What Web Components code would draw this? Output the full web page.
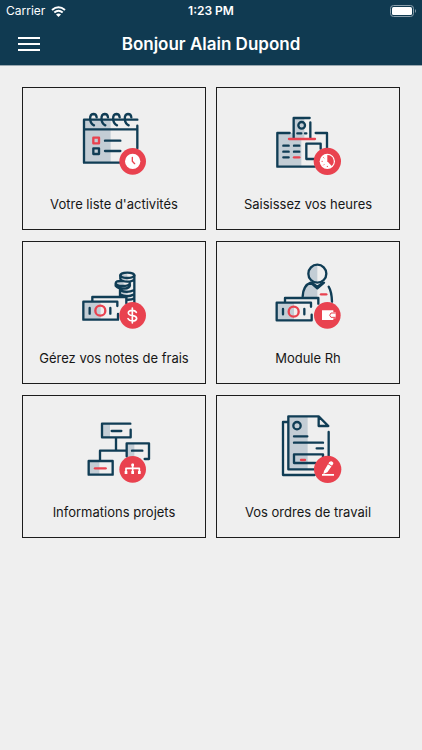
<!DOCTYPE html>
<html lang="fr">
<head>
<meta charset="utf-8">
<meta name="viewport" content="width=device-width, initial-scale=1">
<title>Bonjour Alain Dupond</title>
<style>
  body {
    margin: 0;
    min-height: 100vh;
    background: #efefef;
    color: #161616;
    font-family: Inter, "Liberation Sans", sans-serif;
  }
</style>
</head>
<body>
<home-page></home-page>

<script>
// 255 unit grid, drawn at 85px. Classes: f = pale fill, r = red stroke, b = badge
const icons = {
  calendar: `
    <path class="f" d="M36 59H116V188H36z"/>
    <path d="M196 59H36V188H145M196 77V145M36 88H196M99 122H145M99 153H145"/>
    <path d="M66 76C52 70 50 43 64 42Q73 42 74 52M100 76C86 70 84 43 98 42Q107 42 108 52M135 76C121 70 119 43 133 42Q142 42 143 52M170 76C156 70 154 43 168 42Q177 42 178 52"/>
    <path class="r" d="M64 113H81V130H64z"/>
    <path d="M64 145H81V162H64z"/>
    <circle class="b" cx="182" cy="184" r="40"/>
    <circle class="w" cx="182" cy="184" r="23"/>
    <path class="r thin" d="M181 172V184L188 191"/>`,
  timeclock: `
    <path class="f" d="M34 99H106V200H34zM83 55H115V113H83z"/>
    <path d="M71 99H34V200H146M149 99H183V146"/>
    <path d="M83 113V54H131M133 67V113M94 100H106M117 100H121"/>
    <circle cx="107" cy="76" r="10"/>
    <path class="r" d="M69 117H147"/>
    <path d="M52 137H68M84 137H100M52 155H68M84 155H100M52 172H68"/>
    <path class="r" d="M84 172H100"/>
    <path d="M164 146V131H121V177H146"/>
    <circle class="b" cx="184" cy="184" r="41"/>
    <circle class="w" cx="184" cy="184" r="23"/>
    <path class="b" d="M184 184V165A19 19 0 0 1 197 198z"/>
    <path class="r dots" d="M168 184H169M173 173L174 174M173 195L174 194M184 199V200"/>`,
  money: `
    <path class="f" d="M146 61H166V82H146zM133 79H155V98H133zM146 99H167V140H146z"/>
    <ellipse cx="166" cy="64" rx="21" ry="8"/>
    <path d="M145 64V75Q150 83 166 83Q182 83 187 75V64M150 81Q131 80 131 88Q133 97 154 96Q174 95 174 86M131 88V95Q139 105 155 104Q174 103 174 93M144 104V128M187 76V148M145 109Q165 119 187 108M145 122Q165 132 187 121M163 137Q179 138 187 133"/>
    <path class="bill" d="M61 129H163V196H61z"/>
    <path class="f" d="M34 143H86V197H34z"/>
    <path d="M61 140V129H163V148M136 143H34V197H138V180M136 143V156M53 162V179M115 162V179"/>
    <circle class="r" cx="85" cy="170" r="15"/>
    <circle class="b" cx="182" cy="184" r="40"/>
    <path class="ws" d="M193 175Q189 169 181 169Q169 169 169 177Q170 184 182 185Q194 187 194 194Q192 201 181 201Q172 201 168 194M181 162V207"/>`,
  employee: `
    <path class="f" d="M154 32A27 27 0 0 0 154 86zM111 130Q112 92 133 88L154 103V132z"/>
    <circle cx="154" cy="59" r="27"/>
    <path d="M110 127Q112 94 134 86L154 103L174 86M137 86L154 98L171 86M188 98Q197 113 198 143"/>
    <path class="r" d="M165 121H181"/>
    <path class="f" d="M32 146H84V199H32z"/>
    <path d="M57 142V132H157V149M135 146H32V199H137V182M135 146V158M51 165V181M115 165V181"/>
    <circle class="r" cx="83" cy="173" r="15"/>
    <circle class="b" cx="184" cy="184" r="40"/>
    <path class="w" d="M168 169H202V175H209V193H202V198H168z"/>
    <path class="r line" d="M208 177H195Q187 184 195 190H208"/>`,
  project: `
    <path class="f" d="M90 47H114V88H90zM164 106H187V153H164zM50 159H82V200H50z"/>
    <path d="M175 47H90V88H176V65M119 69H148M132 88V128M84 159V128H164M164 145V106H231V153H218M180 128H211M50 159H122V200H50z"/>
    <path class="r" d="M69 181H101"/>
    <circle class="b" cx="182" cy="184" r="40"/>
    <path class="ws" d="M162 194V181H202V194M182 169V194"/>
    <path class="w" d="M178 167H186V175H178zM158 189H166V198H158zM178 189H186V198H178zM198 189H206V198H198z"/>`,
  documents: `
    <path class="f" d="M67 25H125V184H67z"/>
    <path d="M67 42H51V201H146M158 25H67V184H146M158 25L187 54H158zM188 72V148M84 85H124M84 104H171M152 121H171M171 148V139H84V165H148"/>
    <circle cx="93" cy="53" r="11"/>
    <path class="r" d="M105 156H117"/>
    <circle class="b" cx="185" cy="184" r="41"/>
    <path class="w" d="M174 189L190 162Q196 157 200 162Q204 165 201 169L184 193L172 198zM168 198H204V203H168z"/>
    <path class="r line" d="M187 168L197 174"/>`
};

class HomePage extends HTMLElement {
  connectedCallback() {
    this.attachShadow({ mode: 'open' });
    this.shadowRoot.innerHTML = `
      <style>
        :host { display: block; }
        main {
          display: grid;
          grid-template-columns: 1fr 1fr;
          gap: 11px 10px;
          padding: 21px 22px;
        }
      </style>
      <app-header>Bonjour Alain Dupond</app-header>
      <main>
        <menu-card icon="calendar">Votre liste d'activités</menu-card>
        <menu-card icon="timeclock">Saisissez vos heures</menu-card>
        <menu-card icon="money">Gérez vos notes de frais</menu-card>
        <menu-card icon="employee">Module Rh</menu-card>
        <menu-card icon="project">Informations projets</menu-card>
        <menu-card icon="documents">Vos ordres de travail</menu-card>
      </main>
    `;
  }
}

class StatusBar extends HTMLElement {
  connectedCallback() {
    this.attachShadow({ mode: 'open' });
    this.shadowRoot.innerHTML = `
      <style>
        :host {
          display: grid;
          grid-template-columns: 1fr auto 1fr;
          align-items: center;
          height: 22px;
          padding: 0 6px;
          font-size: 12px;
          line-height: 22px;
        }
        .carrier { display: flex; align-items: center; gap: 6px; }
        .time { font-weight: 600; }
        svg { display: block; }
        .battery { justify-self: end; }
      </style>
      <span class="carrier">Carrier
        <svg width="15" height="11" viewBox="0 0 15 11" fill="none" stroke="#fff" stroke-width="2" aria-hidden="true">
          <path d="M1 4Q7.500 -1.500 14 4M3.300 6.600Q7.500 3 11.700 6.600"/>
          <path d="M5 8.400Q7.500 6.500 10 8.400L7.500 11z" fill="#fff" stroke="none"/>
        </svg>
      </span>
      <span class="time">1:23 PM</span>
      <svg class="battery" width="26" height="12" viewBox="0 0 26 12" aria-hidden="true">
        <rect x=".5" y=".5" width="23" height="11" rx="3" fill="none" stroke="#8a9fac"/>
        <rect x="2" y="2" width="20" height="8" rx="1.500" fill="#fff"/>
        <path d="M25 4Q27 6 25 8z" fill="#8a9fac"/>
      </svg>
    `;
  }
}

class AppHeader extends HTMLElement {
  connectedCallback() {
    this.attachShadow({ mode: 'open' });
    this.shadowRoot.innerHTML = `
      <style>
        :host {
          display: block;
          background: #103a51;
          border-bottom: 1px solid #9aa8b0;
          color: #fff;
        }
        .bar {
          display: grid;
          grid-template-columns: 46px 1fr 46px;
          align-items: center;
          height: 43px;
          padding: 0 6px;
        }
        button {
          display: grid;
          place-items: center;
          height: 43px;
          padding: 0;
          border: 0;
          background: none;
          color: inherit;
          cursor: pointer;
        }
        h1 {
          margin: 0;
          font-size: 17px;
          font-weight: 600;
          line-height: 22px;
          text-align: center;
        }
      </style>
      <header>
        <status-bar></status-bar>
        <div class="bar">
          <button type="button" aria-label="Menu">
            <svg width="22" height="14" viewBox="0 0 22 14" stroke="currentColor" stroke-width="2" aria-hidden="true">
              <path d="M0 1H22M0 7H22M0 13H22"/>
            </svg>
          </button>
          <h1><slot></slot></h1>
        </div>
      </header>
    `;
  }
}

class MenuCard extends HTMLElement {
  connectedCallback() {
    this.attachShadow({ mode: 'open' });
    this.shadowRoot.innerHTML = `
      <style>
        :host { display: block; }
        button {
          display: flex;
          flex-direction: column;
          align-items: center;
          gap: 9px;
          width: 100%;
          padding: 12px 4px 15px;
          border: 1px solid #1c1c1c;
          background: none;
          color: inherit;
          font: inherit;
          font-size: 13px;
          line-height: 20px;
          cursor: pointer;
        }
        svg {
          width: 85px;
          height: 85px;
          fill: none;
          stroke: #103d55;
          stroke-width: 7;
          stroke-linecap: round;
          stroke-linejoin: round;
        }
        .f { fill: #c3cdd5; stroke: none; }
        .r { stroke: #e9424f; }
        .b { fill: #e9424f; stroke: none; }
        .w { fill: #fff; stroke: none; }
        .bill { fill: #efefef; stroke: none; }
        .ws { stroke: #fff; stroke-width: 5; }
        .thin { stroke-width: 4; }
        .line, .dots { stroke-width: 3; }
      </style>
      <button type="button">
        <svg viewBox="0 0 255 255" aria-hidden="true">${icons[this.getAttribute('icon')]}</svg>
        <span><slot></slot></span>
      </button>
    `;
  }
}

customElements.define('status-bar', StatusBar);
customElements.define('app-header', AppHeader);
customElements.define('menu-card', MenuCard);
customElements.define('home-page', HomePage);
</script>
</body>
</html>
